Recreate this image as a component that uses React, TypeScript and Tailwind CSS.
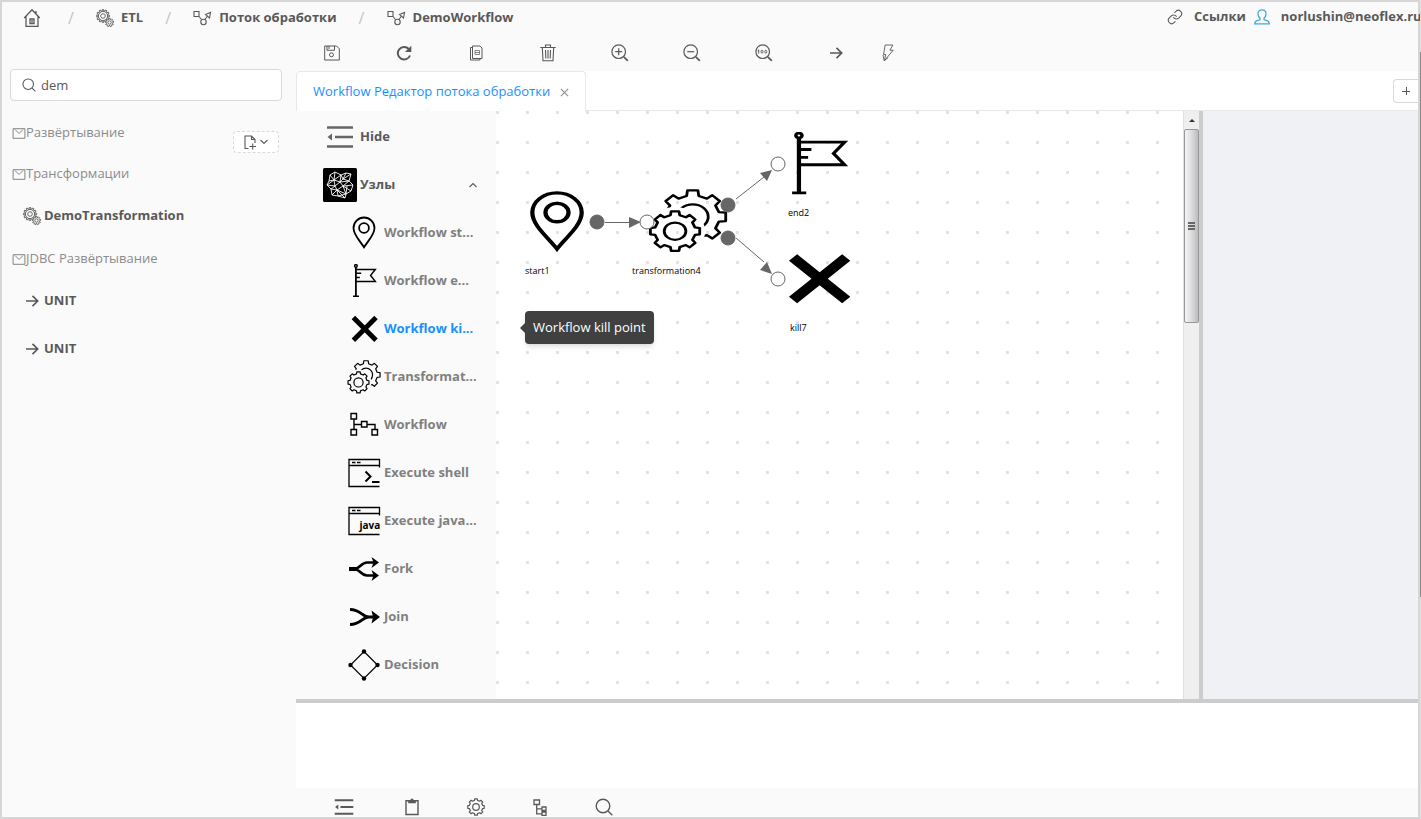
import { useId, useState, type ReactNode } from 'react'
import { Link } from 'lucide-react'

type IconProps = { className?: string }

function Svg({ box, className, children, width = 1.2, stretch }: { box: string; className?: string; children: ReactNode; width?: number; stretch?: boolean }) {
  return (
    <svg
      viewBox={box}
      className={className}
      preserveAspectRatio={stretch ? 'none' : undefined}
      fill="none"
      stroke="currentColor"
      strokeWidth={width}
      aria-hidden="true"
    >
      {children}
    </svg>
  )
}

function gearPath(cx: number, cy: number, outer: number, root: number, teeth: number) {
  const points: string[] = []
  for (let i = 0; i < teeth; i++) {
    const a = (i * 2 * Math.PI) / teeth
    const step = Math.PI / teeth
    const corners: [number, number][] = [
      [root, a - step * 0.58],
      [outer, a - step * 0.4],
      [outer, a + step * 0.4],
      [root, a + step * 0.58],
    ]
    corners.forEach(([r, t]) => points.push(`${(cx + r * Math.sin(t)).toFixed(2)} ${(cy - r * Math.cos(t)).toFixed(2)}`))
  }
  return `M${points.join('L')}Z`
}

/* Small interface icons */

const HomeIcon = ({ className }: IconProps) => (
  <Svg box="0 0 18 20" className={className} width={1.3}>
    <path d="M1.2 10 9 1.8 16.8 10M3 8.500V18.300H15V8.500M7 11H11V15.500H7ZM9 12v2.500M13 3v3" />
  </Svg>
)
const SmallGears = ({ className }: IconProps) => (
  <Svg box="0 0 18 18" className={className} width={0.9}>
    <path d={gearPath(7, 7, 6.6, 5.2, 12)} />
    <circle cx="7" cy="7" r="4.6" />
    <circle cx="7" cy="7" r="2.3" />
    <path d={gearPath(13.5, 13.5, 4.2, 3.2, 9)} fill="#fafafa" />
    <circle cx="13.5" cy="13.5" r="1.7" />
  </Svg>
)
const FlowIcon = ({ className }: IconProps) => (
  <Svg box="0 0 19 16" className={className} width={1.1}>
    <path d="M1 1.500h5v5H1ZM6 6.500l2.500 3M12 9.500l2.500-3.500M12.500 4.500l5-2-1 5.500Z" />
    <circle cx="10.5" cy="12" r="2.7" />
  </Svg>
)
const UserIcon = ({ className }: IconProps) => (
  <Svg box="0 0 16 16" className={className} width={1.3}>
    <path d="M6 9.300C4.500 8 4 6.500 4 4.700 4 2.300 5.700.8 8 .8s4 1.500 4 3.900C12 6.500 11.500 8 10 9.300v1.200l3.500 1.300c1.200.5 1.700 1.200 1.800 3H.7c.1-1.800.6-2.500 1.800-3L6 10.500Z" />
  </Svg>
)
const SearchIcon = ({ className }: IconProps) => (
  <Svg box="0 0 18 18" className={className} width={1.4}>
    <circle cx="8" cy="8" r="6.8" />
    <path d="m13 13 4.300 4.300" />
  </Svg>
)
const SaveIcon = ({ className }: IconProps) => (
  <Svg box="0 0 16 16" className={className} width={1}>
    <path d="M.7 1h11.800l2.800 2.800V15H.7ZM3 1v4.300h7.500V1M5 1v3" />
    <circle cx="7.5" cy="9.8" r="2" />
  </Svg>
)
const ReloadIcon = ({ className }: IconProps) => (
  <Svg box="0 0 16 16" className={className} width={2}>
    <path d="M14 10.500A6.300 6.300 0 1 1 12.800 4" />
    <path d="M15.300.8v6.200H9Z" fill="currentColor" stroke="none" />
  </Svg>
)
const CopyIcon = ({ className }: IconProps) => (
  <Svg box="0 0 14 16" className={className} width={1}>
    <path d="M3.500 1h7.500l2 2v10.500H3.500ZM3.500 2.500h-2V15h9.500v-1.500" />
    <path d="M6 5.500h4.500v4H6ZM6 7.500h4.500" strokeWidth="0.7" />
  </Svg>
)
const TrashIcon = ({ className }: IconProps) => (
  <Svg box="0 0 16 18" className={className} width={1.1}>
    <path d="M.3 3.500h15.400M5.500 3.200V1h5v2.200M2.300 3.500 3 16.800h10l.7-13.300M5.500 6l.3 8.500M8 6v8.500M10.500 6l-.3 8.500" />
  </Svg>
)
function ZoomGlyph({ className, children }: { className?: string; children: ReactNode }) {
  return (
    <Svg box="0 0 18 18" className={className} width={1.2}>
      <circle cx="7.7" cy="7.7" r="6.8" />
      <path d="m12.800 12.800 4 4" strokeWidth="1.8" />
      {children}
    </Svg>
  )
}
const ArrowIcon = ({ className }: IconProps) => (
  <Svg box="0 0 14 14" className={className} width={1.7}>
    <path d="M1 7h11.500M7.500 1.800 12.700 7l-5.200 5.200" />
  </Svg>
)
const BoltIcon = ({ className }: IconProps) => (
  <Svg box="0 0 12 18" className={className} width={0.9}>
    <path d="M3.200 1h7.800L7.800 6.200h3.400L2.500 16.500l1.200-6H1.500ZM1 11l1.200 5.800 4-3.300" />
  </Svg>
)
const OutdentIcon = ({ className }: IconProps) => (
  <Svg box="0 0 28 22" className={className} width={2.6}>
    <path d="M1 1.500h26M9 11h18M1 20.500h26" />
    <path d="M6 7.500v7L1.500 11Z" fill="currentColor" stroke="none" />
  </Svg>
)
const ClipboardIcon = ({ className }: IconProps) => (
  <Svg box="0 0 14 18" className={className} width={1.4}>
    <path d="M1 2.800h12V16.500H1Z" />
    <path d="M3.200 2.200h2.200a1.600 1.600 0 0 1 3.200 0h2.200V5.300H3.200Z" fill="currentColor" stroke="none" />
  </Svg>
)
const CogIcon = ({ className }: IconProps) => (
  <Svg box="0 0 18 18" className={className} width={1.2}>
    <path d={gearPath(9, 9, 8.3, 6.8, 8)} strokeLinejoin="round" />
    <circle cx="9" cy="9" r="3.3" />
  </Svg>
)
const TreeIcon = ({ className }: IconProps) => (
  <Svg box="0 0 14 17" className={className} width={1.3}>
    <path d="M1 1h5.500v4.500H1ZM3.700 5.500v9.300H9M3.700 9.800H9M9 8h4v3.500H9ZM9 13h4v3.300H9Z" />
  </Svg>
)
const MailIcon = ({ className }: IconProps) => (
  <Svg box="0 0 13 11" className={className} width={0.9}>
    <path d="M.6.7h11.800v9.600H.6ZM2.500 1.500l4 4 4-4" />
  </Svg>
)
const FilePlusIcon = ({ className }: IconProps) => (
  <Svg box="0 0 13 15" className={className} width={1.1}>
    <path d="M4.500 13.500H1V1h6.500L11 4.500V8M7.500 1v3.500H11M5.500 11.500h6.500M8.700 8.500v6" />
  </Svg>
)
const Chevron = ({ className }: IconProps) => (
  <Svg box="0 0 10 6" className={className} width={1.1}>
    <path d="m1.500 1 3.500 3.500L8.500 1" />
  </Svg>
)

/* Node pictures share a 34 x 34 grid and stretch to their box */

const PinNode = ({ className }: IconProps) => (
  <Svg box="0 0 34 34" className={className} width={1.8} stretch>
    <path d="M17 31.300C13.500 25.500 6.500 19 6.500 12A10.500 10.500 0 0 1 27.500 12C27.500 19 20.500 25.500 17 31.300Z" />
    <circle cx="17" cy="12" r="4.9" />
  </Svg>
)
const FlagNode = ({ className }: IconProps) => (
  <Svg box="0 0 34 34" className={className} width={1.5} stretch>
    <circle cx="8.9" cy="1.9" r="1.3" />
    <path d="M8.900 3.300V32" strokeWidth="1.8" />
    <path d="M6 32.300h6M9 5.400h19.300l-4.700 6 4.700 6H9M9 9.300h5.200M9 13.500h3.800" />
  </Svg>
)
const KillNode = ({ className }: IconProps) => (
  <Svg box="0 0 34 34" className={className} width={4.9} stretch>
    <path d="M6.400 5.600 29 28.200M29 5.600 6.400 28.200" />
  </Svg>
)
function GearsNode({ className }: IconProps) {
  const id = useId()
  return (
    <Svg box="0 0 34 34" className={className} width={1.2} stretch>
      <mask id={id} maskUnits="userSpaceOnUse" x="-1" y="-1" width="36" height="36">
        <rect x="-1" y="-1" width="36" height="36" fill="#fff" stroke="none" />
        <circle cx="11.5" cy="22.4" r="12.8" fill="#000" stroke="none" />
      </mask>
      <g mask={`url(#${id})`} strokeLinejoin="round">
        <path d={gearPath(19, 14.8, 14.2, 11.4, 8)} />
        <circle cx="19" cy="14.8" r="6.6" />
      </g>
      <path d={gearPath(11.5, 22.4, 10.6, 8.7, 8)} strokeLinejoin="round" />
      <circle cx="11.5" cy="22.4" r="4.6" />
    </Svg>
  )
}
const FlowNode = ({ className }: IconProps) => (
  <Svg box="0 0 34 34" className={className} width={1.4}>
    <path d="M4 5.500h5.500v5.500H4ZM4 21.500h5.500v5.500H4ZM14.500 13.500h5.500v5.500h-5.500ZM25 21.500h5.500v5.500H25ZM7 11v10.500M7 16.500h7.500M20 16.500H28v5" />
  </Svg>
)
const WindowFrame = () => <path d="M32.500 11.500V3.500H2V30.500H32.500M2 9.500h30.500M5 6.500h3.500M10 6.500h3.500" />
const ShellNode = ({ className }: IconProps) => (
  <Svg box="0 0 34 34" className={className} width={1.3}>
    <WindowFrame />
    <path d="m18.500 15.500 5 5-5 5M25 26h7.500" strokeWidth="2" />
  </Svg>
)
const JavaNode = ({ className }: IconProps) => (
  <Svg box="0 0 34 34" className={className} width={1.3}>
    <WindowFrame />
    <text x="12.5" y="25" fill="currentColor" stroke="none" fontSize="10" fontWeight="700" fontFamily="Open Sans, sans-serif">java</text>
  </Svg>
)
const ForkNode = ({ className }: IconProps) => (
  <Svg box="0 0 34 34" className={className} width={2.6}>
    <path d="M2 17H7C13 17 14 10.500 20 10.500H27M7 17C13 17 14 23.500 20 23.500H27" />
    <path d="M2 15H9V19H2ZM24.500 5 32 10.500 24.500 16 26.500 10.500ZM24.500 18 32 23.500 24.500 29 26.500 23.500Z" fill="currentColor" stroke="none" />
  </Svg>
)
const JoinNode = ({ className }: IconProps) => (
  <Svg box="0 0 34 34" className={className} width={2.8}>
    <path d="M3 9.500C14 9.500 15 17 22 17H28M3 24.500C14 24.500 15 17 22 17" />
    <path d="M24.500 10.500 33 17 24.500 23.500 26 17Z" fill="currentColor" stroke="none" />
  </Svg>
)
const DecisionNode = ({ className }: IconProps) => (
  <Svg box="0 0 34 34" className={className} width={1.2}>
    <path d="M17 3.500 30.500 17 17 30.500 3.500 17Z" />
    <g fill="currentColor" stroke="none">
      <circle cx="17" cy="3.5" r="2.2" />
      <circle cx="30.5" cy="17" r="2.2" />
      <circle cx="17" cy="30.5" r="2.2" />
      <circle cx="3.5" cy="17" r="2.2" />
    </g>
  </Svg>
)
const MeshIcon = ({ className }: IconProps) => (
  <svg viewBox="0 0 34 34" className={className} fill="none" stroke="#fff" strokeWidth="0.9" aria-hidden="true">
    <rect width="34" height="34" rx="1.5" fill="#000" stroke="none" />
    <path d="M7 7 12 4 18 7 23 5 28 6 26 13 30 17 28 23 23 26 22 30 15 28 9 27 8 21 4 17 6 13ZM7 7 11 12 18 7 17 14 11 12 12 4M6 13 11 12 4 17 12 18 11 12M8 21 12 18 17 14 20 18 14 22 8 21M14 22 9 27M14 22 15 28 23 26 20 18 26 13 17 14M23 5 20 11 28 6M18 7 20 11 17 14M20 11 26 13M20 18 30 17M20 18 28 23M14 22 22 30M12 18 14 22 23 26 24 18" />
  </svg>
)

/* Page parts */

const crumbs = [
  { label: 'ETL', icon: <SmallGears className="h-[18px] w-[18px]" /> },
  { label: 'Поток обработки', icon: <FlowIcon className="h-4 w-[19px]" /> },
  { label: 'DemoWorkflow', icon: <FlowIcon className="h-4 w-[19px]" /> },
]

function Header() {
  return (
    <header className="flex h-[33px] shrink-0 items-start font-bold">
      <nav aria-label="Путь" className="flex h-8 items-center pl-[21px]">
        <a href="#home" aria-label="Главная">
          <HomeIcon className="h-5 w-[18px]" />
        </a>
        {crumbs.map((crumb) => (
          <div key={crumb.label} className="flex items-center first-of-type:pl-[5px]">
            <span className="w-[50px] pl-[22px] text-base font-normal text-[#c4c4c4]">/</span>
            <a href={`#${crumb.label}`} className="flex items-center gap-[7px]">
              {crumb.icon}
              {crumb.label}
            </a>
          </div>
        ))}
      </nav>
      <div className="ml-auto flex h-[30px] w-[251px] shrink-0 items-center whitespace-nowrap">
        <a href="#links" className="flex items-center gap-[11px]">
          <Link className="h-4 w-4" strokeWidth={1.6} />
          Ссылки
        </a>
        <a href="#user" className="flex items-center gap-[11px] pl-2">
          <UserIcon className="h-4 w-4 text-[#40a9e0]" />
          norlushin@neoflex.ru
        </a>
      </div>
    </header>
  )
}

function Unit({ icon, children }: { icon: ReactNode; children: ReactNode }) {
  return (
    <li>
      <a href="#item" className="flex h-12 items-center pl-[21px] font-bold">
        <span className="flex w-[21px] items-center">{icon}</span>
        {children}
      </a>
    </li>
  )
}

function Group({ title, children }: { title: string; children?: ReactNode }) {
  return (
    <section className={children ? 'mb-px' : 'mb-[5px]'}>
      <h2 className="flex h-9 items-center pl-2.5 text-[#8c8c8c]">
        <MailIcon className="h-[11px] w-[14px] text-[#777]" />
        {title}
      </h2>
      {children && <ul>{children}</ul>}
    </section>
  )
}

function Sidebar() {
  const [query, setQuery] = useState('dem')
  return (
    <aside className="w-[294px] shrink-0 pt-[34px]">
      <label className="mr-[14px] ml-2 flex h-8 items-center gap-[5px] rounded border border-[#d9d9d9] bg-white pl-[11px]">
        <SearchIcon className="h-3.5 w-3.5" />
        <input aria-label="Поиск" value={query} onChange={(e) => setQuery(e.target.value)} className="min-w-0 flex-1 bg-transparent pt-0.5 outline-none" />
      </label>
      <div className="relative mt-[14px]">
        <Group title="Развёртывание" />
        <Group title="Трансформации">
          <Unit icon={<SmallGears className="h-[18px] w-[18px]" />}>DemoTransformation</Unit>
        </Group>
        <Group title="JDBC Развёртывание">
          <Unit icon={<ArrowIcon className="ml-0.5 h-3.5 w-3.5" />}>UNIT</Unit>
          <Unit icon={<ArrowIcon className="ml-0.5 h-3.5 w-3.5" />}>UNIT</Unit>
        </Group>
        <button aria-label="Создать" className="absolute top-4 right-[17px] flex h-[22px] w-[46px] items-center justify-center gap-0.5 rounded-sm border border-dashed border-[#d9d9d9] bg-white">
          <FilePlusIcon className="h-[15px] w-[13px]" />
          <Chevron className="h-1.5 w-2.5" />
        </button>
      </div>
    </aside>
  )
}

const tools = [
  { label: 'Сохранить', icon: <SaveIcon className="h-4 w-4" /> },
  { label: 'Обновить', icon: <ReloadIcon className="h-4 w-4" /> },
  { label: 'Копировать', icon: <CopyIcon className="h-4 w-3.5" /> },
  { label: 'Удалить', icon: <TrashIcon className="h-[18px] w-4" /> },
  { label: 'Увеличить', icon: <ZoomGlyph className="h-[18px] w-[18px]"><path d="M4.200 7.700h7M7.700 4.200v7" /></ZoomGlyph> },
  { label: 'Уменьшить', icon: <ZoomGlyph className="h-[18px] w-[18px]"><path d="M4.200 7.700h7" /></ZoomGlyph> },
  { label: 'Масштаб 100%', icon: <ZoomGlyph className="h-[18px] w-[18px]"><path d="M3.700 5.800v3.800M2.600 6.800l1.100-.8" strokeWidth="1" /><ellipse cx="7" cy="7.7" rx="1" ry="1.5" strokeWidth="0.9" /><ellipse cx="10.8" cy="7.7" rx="1" ry="1.5" strokeWidth="0.9" /></ZoomGlyph> },
  { label: 'Далее', icon: <ArrowIcon className="h-3.5 w-3.5" /> },
]

function Toolbar() {
  return (
    <div role="toolbar" className="flex h-9 shrink-0 items-center">
      {tools.map((tool) => (
        <button key={tool.label} aria-label={tool.label} className="flex h-9 w-[72px] items-center justify-center">
          {tool.icon}
        </button>
      ))}
      <button aria-label="Запустить" className="flex h-9 w-8 items-center justify-center">
        <BoltIcon className="h-[18px] w-3" />
      </button>
    </div>
  )
}

function Tabs() {
  return (
    <div className="flex h-10 shrink-0 items-stretch bg-white">
      <div className="flex items-center gap-2.5 rounded-t border border-b-0 border-[#e8e8e8] px-4 pt-px text-[#1890ff]">
        <button className="whitespace-nowrap">Workflow Редактор потока обработки</button>
        <button aria-label="Закрыть вкладку" className="text-[#8c8c8c]">
          <Svg box="0 0 10 10" className="h-[9px] w-[9px]"><path d="m1 1 8 8M9 1 1 9" /></Svg>
        </button>
      </div>
      <div className="flex flex-1 items-center justify-end border-b border-[#e8e8e8]">
        <button aria-label="Добавить вкладку" className="flex h-6 w-[25px] items-center justify-center rounded-l border border-r-0 border-[#d9d9d9]">
          <Svg box="0 0 8 8" className="h-2 w-2" width={1}><path d="M0 4.500h8M4.500 0v8" /></Svg>
        </button>
      </div>
    </div>
  )
}

const nodeTypes = [
  { label: 'Workflow st...', title: 'Workflow start point', icon: PinNode },
  { label: 'Workflow e...', title: 'Workflow end point', icon: FlagNode },
  { label: 'Workflow ki...', title: 'Workflow kill point', icon: KillNode },
  { label: 'Transformat...', title: 'Transformation', icon: GearsNode },
  { label: 'Workflow', title: 'Workflow', icon: FlowNode },
  { label: 'Execute shell', title: 'Execute shell', icon: ShellNode },
  { label: 'Execute java...', title: 'Execute java', icon: JavaNode },
  { label: 'Fork', title: 'Fork', icon: ForkNode },
  { label: 'Join', title: 'Join', icon: JoinNode },
  { label: 'Decision', title: 'Decision', icon: DecisionNode },
]

function Palette() {
  const active = 'Workflow kill point'
  return (
    <div className="w-[200px] shrink-0 pt-0.5 font-bold">
      <button className="flex h-12 w-full items-center gap-1.5 pl-[30px]">
        <OutdentIcon className="h-[22px] w-7 text-[#666]" />
        Hide
      </button>
      <button className="flex h-12 w-full items-center gap-[3px] pr-[18px] pl-[27px]" aria-expanded="true">
        <MeshIcon className="h-[34px] w-[34px]" />
        Узлы
        <Chevron className="ml-auto h-1.5 w-2.5 rotate-180" />
      </button>
      <ul>
        {nodeTypes.map(({ label, title, icon: Icon }) => (
          <li key={title}>
            <button title={title} className="flex h-12 w-full items-center gap-[3px] pl-[51px] text-left whitespace-nowrap">
              <Icon className="h-[34px] w-[34px] shrink-0 text-black" />
              <span className={title === active ? 'text-[#1890ff]' : 'text-[#808080]'}>{label}</span>
            </button>
          </li>
        ))}
      </ul>
    </div>
  )
}

function Canvas() {
  return (
    <div className="relative min-w-0 flex-1 overflow-hidden bg-white bg-[conic-gradient(from_270deg_at_3px_3px,#e3e3e3_90deg,transparent_0)] bg-[length:30px_30px] text-[9px] leading-3 text-black">
      <PinNode className="absolute top-[79px] left-[21px] h-16 w-20" />
      <GearsNode className="absolute top-[78px] left-[152px] h-16 w-20" />
      <FlagNode className="absolute top-[21px] left-[282px] h-16 w-20" />
      <KillNode className="absolute top-[136px] left-[282px] h-16 w-20" />
      <svg className="absolute top-0 left-0 h-60 w-96" viewBox="0 0 384 240" fill="#666" stroke="#666" aria-hidden="true">
        <path d="M109 111.500h30M240 88l28-22M240 127l28 24" />
        <path d="M145 111l-12-5v11ZM276 59l-5 11-7-8ZM276 163l-12-4 7-8Z" stroke="none" />
        <circle cx="101" cy="111" r="7" />
        <circle cx="232" cy="94" r="7" />
        <circle cx="232" cy="127" r="7" />
        <circle cx="151" cy="111" r="7" fill="#fff" />
        <circle cx="282" cy="53" r="7" fill="#fff" />
        <circle cx="282" cy="168" r="7" fill="#fff" />
      </svg>
      <span className="absolute top-[154px] left-[29px]">start1</span>
      <span className="absolute top-[154px] left-[136px]">transformation4</span>
      <span className="absolute top-[96px] left-[292px]">end2</span>
      <span className="absolute top-[211px] left-[294px]">kill7</span>
      <div role="tooltip" className="absolute top-[200px] left-[29px] rounded bg-[#404040] px-2 py-1.5 text-[13px] leading-[21px] whitespace-nowrap text-white shadow-md">
        <span className="absolute top-3 -left-[5px] border-y-[5px] border-r-[5px] border-y-transparent border-r-[#404040]" />
        Workflow kill point
      </div>
    </div>
  )
}

function ScrollBar() {
  return (
    <div className="flex w-4 shrink-0 flex-col border-l border-[#e0e0e0] bg-[#efefef]">
      <span className="flex h-[18px] items-center justify-center">
        <span className="border-x-[3px] border-b-[3px] border-x-transparent border-b-[#333]" />
      </span>
      <span className="flex h-[33%] flex-col items-center justify-center gap-px rounded-xs border border-[#979797] bg-linear-to-r from-[#f5f5f5] via-[#dcdcde] to-[#bcbcc0]">
        <span className="h-0.5 w-[7px] bg-[#666]" />
        <span className="h-0.5 w-[7px] bg-[#666]" />
        <span className="h-0.5 w-[7px] bg-[#666]" />
      </span>
    </div>
  )
}

const panels = [
  { label: 'Скрыть', icon: <OutdentIcon className="h-4 w-5" /> },
  { label: 'Буфер', icon: <ClipboardIcon className="h-[18px] w-3.5" /> },
  { label: 'Настройки', icon: <CogIcon className="h-[18px] w-[18px]" /> },
  { label: 'Дерево', icon: <TreeIcon className="h-[17px] w-3.5" /> },
  { label: 'Найти', icon: <SearchIcon className="h-[18px] w-[18px]" /> },
]

export default function App() {
  return (
    <div className="flex h-screen overflow-hidden bg-[#fafafa] font-['Open_Sans','Noto_Sans',sans-serif] text-[13px] text-[#595959]">
      <div className="flex min-w-0 flex-1 flex-col border-2 border-[#d6d6d6]">
        <Header />
        <div className="flex min-h-0 flex-1">
          <Sidebar />
          <main className="flex min-w-0 flex-1 flex-col">
            <Toolbar />
            <Tabs />
            <div className="flex min-h-0 flex-1 overflow-hidden">
              <Palette />
              <Canvas />
              <ScrollBar />
              <div className="w-[219px] shrink-0 border-l-4 border-[#ccc] bg-[#eff1f5]" />
            </div>
            <div className="h-[89px] shrink-0 border-t-4 border-[#ccc] bg-white" />
            <footer className="flex h-[29px] shrink-0 items-end pl-4">
              {panels.map((panel) => (
                <button key={panel.label} aria-label={panel.label} className="flex h-5 w-16 items-center justify-center first:mr-1">
                  {panel.icon}
                </button>
              ))}
            </footer>
          </main>
        </div>
      </div>
      <div className="flex w-px flex-col bg-[#e0e0e0] pt-[52px]">
        <span className="h-[71%] bg-[#8a8a8a]" />
      </div>
    </div>
  )
}
